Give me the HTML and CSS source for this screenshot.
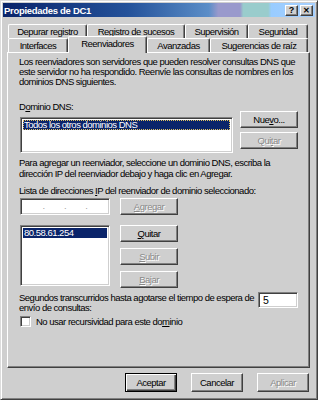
FILE: index.html
```html
<!DOCTYPE html>
<html lang="es">
<head>
    <meta charset="UTF-8">
    <title>Propiedades de DC1</title>
    <link rel="stylesheet" href="styles.css">
</head>
<body>
    <div class="window">
        <div class="titlebar">
            <span class="title">Propiedades de DC1</span>
            <div class="caption-btns">
                <span class="cap">?</span>
                <span class="cap cap-close">&#x2715;</span>
            </div>
        </div>

        <div class="tabs">
            <div class="tab-row">
                <div class="tab w-depurar">Depurar registro</div>
                <div class="tab w-registro">Registro de sucesos</div>
                <div class="tab w-superv">Supervisión</div>
                <div class="tab w-seg">Seguridad</div>
            </div>
            <div class="tab-row">
                <div class="tab w-interfaces">Interfaces</div>
                <div class="tab tab-active w-reenv">Reenviadores</div>
                <div class="tab w-avanz">Avanzadas</div>
                <div class="tab w-suger">Sugerencias de raíz</div>
            </div>
        </div>

        <div class="panel">
            <p class="intro">Los reenviadores son servidores que pueden resolver consultas DNS que<br>este servidor no ha respondido. Reenvíe las consultas de nombres en los<br>dominios DNS siguientes.</p>

            <div class="dns-row">
                <div class="dns-left">
                    <div class="label">D<u>o</u>minio DNS:</div>
                    <div class="field dns-list">
                        <div class="item item-sel item-focus">Todos los otros dominios DNS</div>
                    </div>
                </div>
                <div class="btn-col dns-btns">
                    <button class="btn">Nue<u>v</u>o...</button>
                    <button class="btn" disabled>Qui<u>t</u>ar</button>
                </div>
            </div>

            <p class="help">Para agregar un reenviador, seleccione un dominio DNS, escriba la<br>dirección IP del reenviador debajo y haga clic en Agregar.</p>

            <div class="label ip-label">Lista de direcciones <u>I</u>P del reenviador de dominio seleccionado:</div>

            <div class="ip-row">
                <div class="field ip-input">
                    <span>.</span><span>.</span><span>.</span>
                </div>
                <button class="btn" disabled><u>A</u>gregar</button>
            </div>

            <div class="ip-row ip-list-row">
                <div class="field ip-list">
                    <div class="item item-sel">80.58.61.254</div>
                </div>
                <div class="btn-col ip-btns">
                    <button class="btn"><u>Q</u>uitar</button>
                    <button class="btn" disabled><u>S</u>ubir</button>
                    <button class="btn" disabled><u>B</u>ajar</button>
                </div>
            </div>

            <div class="timeout-row">
                <p class="timeout-text">Segundos transcurridos hasta agotarse el tiempo de espera de<br>envío de consultas:</p>
                <div class="field timeout-input">5</div>
            </div>

            <label class="check-row">
                <span class="checkbox"></span>
                <span>No usar recursividad para este do<u>m</u>inio</span>
            </label>
        </div>

        <div class="footer">
            <button class="btn btn-footer btn-default">Aceptar</button>
            <button class="btn btn-footer">Cancelar</button>
            <button class="btn btn-footer" disabled>Aplicar</button>
        </div>
    </div>
</body>
</html>
```

FILE: styles.css
```css
/* General */
body {
    margin: 0;
    font-family: "Liberation Sans", Arial, sans-serif;
    font-size: 9.5px;
    letter-spacing: -0.5px;
    color: #000;
    background-color: #fff;
}

u {
    text-decoration-thickness: 1px;
    text-underline-offset: 1px;
}

/* Ventana */
.window {
    width: 318px;
    height: 400px;
    box-sizing: border-box;
    background-color: #cfcfcf;
    border: 1px solid;
    border-color: #dcdcdc #404040 #404040 #dcdcdc;
    box-shadow: inset 1px 1px #fff, inset -1px -1px #808080;
    padding: 2px;
    display: flex;
    flex-direction: column;
}

/* Barra de titulo */
.titlebar {
    height: 14px;
    display: flex;
    align-items: center;
    justify-content: space-between;
    padding-right: 2px;
    background: linear-gradient(to right, #0a246a 0%, #24529a 40%, #5b8ec8 66%, #9999cc 69%, #9999cc 76%, #99cccc 77%, #99cccc 85%, #99ccff 86%, #a6d0ff 100%);
}

.title {
    color: #fff;
    font-weight: bold;
    font-size: 9.5px;
    letter-spacing: -0.3px;
    padding-left: 1px;
}

.caption-btns {
    display: flex;
    gap: 2px;
}

.cap {
    width: 13px;
    height: 11px;
    box-sizing: border-box;
    background-color: #cfcfcf;
    border: 1px solid;
    border-color: #fff #404040 #404040 #fff;
    box-shadow: inset -1px -1px #808080;
    font-weight: bold;
    font-size: 9px;
    letter-spacing: 0;
    line-height: 9px;
    text-align: center;
}

.cap-close {
    font-size: 8px;
}

/* Pestañas */
.tabs {
    margin: 7px 0 0 5px;
}

.tab-row {
    display: flex;
    align-items: flex-end;
    height: 14px;
}

.tab {
    box-sizing: border-box;
    height: 14px;
    border-top: 1px solid #fff;
    border-left: 1px solid #fff;
    border-right: 1px solid #404040;
    box-shadow: inset -1px 0 #808080;
    border-radius: 2px 2px 0 0;
    text-align: center;
    line-height: 13px;
    white-space: nowrap;
}

.tab-active {
    position: relative;
    z-index: 1;
    height: 17px;
    margin-bottom: -1px;
    background-color: #cfcfcf;
    line-height: 14px;
}

.w-depurar { width: 79px; }
.w-registro { width: 98px; }
.w-superv { width: 63px; }
.w-seg { width: 60px; }
.w-interfaces { width: 60px; }
.w-reenv { width: 79px; }
.w-avanz { width: 63px; }
.w-suger { width: 98px; }

/* Panel */
.panel {
    box-sizing: border-box;
    width: 303px;
    height: 316px;
    margin-left: 4px;
    border: 1px solid;
    border-color: #fff #404040 #404040 #fff;
    box-shadow: inset -1px -1px #808080;
    padding: 0 11px 0 12px;
    display: flex;
    flex-direction: column;
}

p {
    margin: 0;
}

.intro {
    margin-top: 4px;
    line-height: 10px;
    margin-left: -1px;
}

.label {
    line-height: 10px;
    margin-left: -1px;
}

.dns-row {
    display: flex;
    gap: 7px;
    margin-top: 15px;
}

.dns-left {
    display: flex;
    flex-direction: column;
}

.btn-col {
    display: flex;
    flex-direction: column;
}

.dns-btns {
    margin-top: 9px;
    gap: 4px;
}

/* Campos hundidos */
.field {
    box-sizing: border-box;
    background-color: #fff;
    border: 1px solid;
    border-color: #808080 #fff #fff #808080;
    box-shadow: inset 1px 1px #404040, inset -1px -1px #cfcfcf;
}

.dns-list {
    width: 213px;
    height: 36px;
    margin-top: 5px;
    padding: 2px;
}

.item {
    line-height: 10px;
    padding-left: 1px;
    white-space: nowrap;
}

.item-sel {
    background-color: #0a246a;
    color: #fff;
}

.item-focus {
    outline: 1px dotted #e0c060;
    outline-offset: -1px;
}

.help {
    margin-top: 4px;
    line-height: 11px;
    margin-left: -1px;
}

.ip-label {
    margin-top: 7px;
}

.ip-row {
    display: flex;
    gap: 10px;
    margin-top: 2px;
}

.ip-input {
    width: 90px;
    height: 17px;
    display: flex;
    justify-content: space-around;
    padding: 0 12px;
    color: #a0a0a0;
    line-height: 14px;
}

.ip-list-row {
    margin-top: 10px;
}

.ip-list {
    width: 90px;
    height: 61px;
    padding: 2px;
}

.ip-btns {
    gap: 6px;
}

/* Botones */
.btn {
    box-sizing: border-box;
    width: 58px;
    height: 17px;
    padding: 0;
    background-color: #cfcfcf;
    border: 1px solid;
    border-color: #fff #404040 #404040 #fff;
    box-shadow: inset -1px -1px #808080;
    font-family: inherit;
    font-size: inherit;
    letter-spacing: inherit;
    color: #000;
}

.btn:disabled {
    color: #8a8a8a;
    text-shadow: 1px 1px #fff;
}

/* Tiempo de espera */
.timeout-row {
    display: flex;
    align-items: flex-start;
    justify-content: space-between;
    margin-top: 4px;
}

.timeout-text {
    line-height: 10px;
    padding-top: 1px;
    margin-left: -1px;
    white-space: nowrap;
}

.timeout-input {
    width: 40px;
    height: 16px;
    padding-left: 4px;
    line-height: 15px;
    font-size: 10.5px;
}

.check-row {
    display: flex;
    align-items: center;
    gap: 5px;
    margin-top: 3px;
    line-height: 11px;
}

.checkbox {
    box-sizing: border-box;
    width: 11px;
    height: 11px;
    background-color: #fff;
    border: 1px solid;
    border-color: #808080 #fff #fff #808080;
    box-shadow: inset 1px 1px #404040, inset -1px -1px #cfcfcf;
}

/* Pie */
.footer {
    display: flex;
    justify-content: flex-end;
    gap: 14px;
    margin-top: 5px;
    padding-right: 6px;
}

.btn-footer {
    width: 52px;
    height: 19px;
}

.btn-default {
    border: 1px solid #000;
    box-shadow: inset 1px 1px #fff, inset -1px -1px #404040, inset -2px -2px #808080;
}
```
